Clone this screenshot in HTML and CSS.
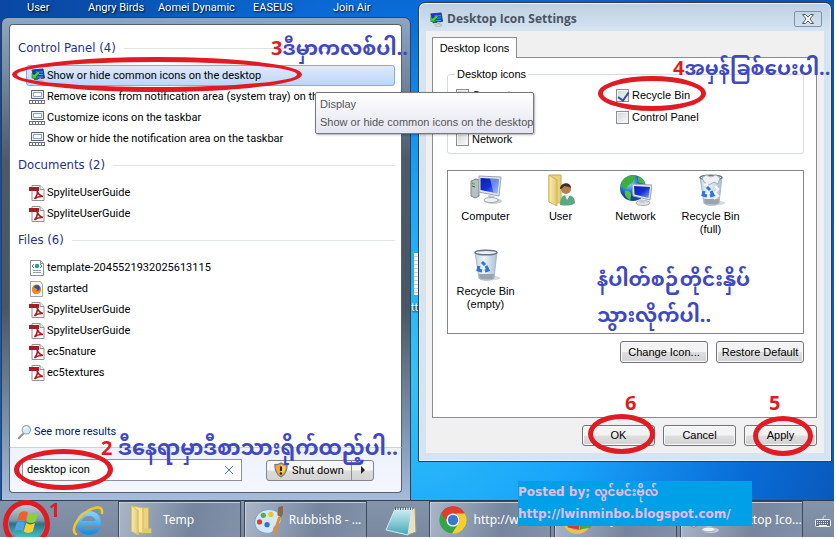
FILE: index.html
```
<!DOCTYPE html>
<html lang="en">
<head>
<meta charset="utf-8">
<title>Desktop</title>
<link rel="stylesheet" href="styles.css">
</head>
<body>
<svg class="defs" aria-hidden="true">
  <defs>
    <linearGradient id="screen" x1="0" y1="0" x2="1" y2="1"><stop offset="0" stop-color="#0a1fa8"/><stop offset=".5" stop-color="#1030d8"/><stop offset="1" stop-color="#7fa5f5"/></linearGradient>
    <linearGradient id="folder" x1="0" x2="1"><stop offset="0" stop-color="#fbeeb0"/><stop offset="1" stop-color="#dfc56a"/></linearGradient>
    <radialGradient id="globe" cx=".35" cy=".3"><stop offset="0" stop-color="#9fe0ff"/><stop offset=".6" stop-color="#2a86d8"/><stop offset="1" stop-color="#0d4a9c"/></radialGradient>
    <linearGradient id="bin" x1="0" x2="1"><stop offset="0" stop-color="#b9cfe4"/><stop offset=".4" stop-color="#e9f3fc"/><stop offset="1" stop-color="#9fb8d0"/></linearGradient>
    <linearGradient id="orb" x1="0" y1="0" x2="0" y2="1"><stop offset="0" stop-color="#c3ced6"/><stop offset=".45" stop-color="#7d9aaa"/><stop offset=".55" stop-color="#2f6f86"/><stop offset="1" stop-color="#3fd8cc"/></linearGradient>
    <linearGradient id="note" x1="0" y1="0" x2="0" y2="1"><stop offset="0" stop-color="#d5f1f4"/><stop offset="1" stop-color="#45a8b8"/></linearGradient>
    <linearGradient id="ie" x1="0" y1="0" x2="0" y2="1"><stop offset="0" stop-color="#7fd0fa"/><stop offset="1" stop-color="#1d8fe0"/></linearGradient>
  </defs>
  <symbol id="i-pdf" viewBox="0 0 16 16">
    <path d="M3 .5h8l4 4v11H3z" fill="#fff" stroke="#9a8f90"/><path d="M11 .5v4h4" fill="#eee" stroke="#9a8f90"/>
    <path d="M0 2h10v4H0z" fill="#a81c28"/><path d="M8 5c1 4 4 6 6 6.500-4-.5-7 1-8.500 2.500C8 11 9 8 8 5z" fill="none" stroke="#b01522" stroke-width="1.500"/>
  </symbol>
  <symbol id="i-tray" viewBox="0 0 16 16">
    <path d="M2.500 1.500h12v8h-12z" fill="#eef2f6" stroke="#59636e"/><path d="M4.500 3.500h8v4h-8z" fill="#fff" stroke="#8fa2b5"/>
    <path d="M0 11h16v4H0z" fill="#6b7177"/><path d="M1 13h14" stroke="#fff" stroke-width="2" stroke-dasharray="2 1"/>
  </symbol>
  <symbol id="i-display" viewBox="0 0 16 16">
    <path d="M3 2l11-1 1.500 9-10 1.500z" fill="#1739c8" stroke="#39404c"/><path d="M7 4h7M7 6.500h7M8 9h6" stroke="#49a1ff"/>
    <path d="M9 11l1 3h3l-1-4z" fill="#b9c0c9"/><ellipse cx="11" cy="14" rx="4" ry="1.400" fill="#d4d8dd" stroke="#99a0a8" stroke-width=".6"/><path d="M3 10V5l2 2 4-4 2 2-4 4 2 2z" fill="#3fd23c" stroke="#11691a" stroke-width=".6"/>
  </symbol>
  <symbol id="i-xml" viewBox="0 0 16 16">
    <path d="M1.500.5h10l3 3v12h-13z" fill="#fff" stroke="#8b8f94"/><path d="M11.500.5v3h3" fill="#ddd" stroke="#8b8f94"/>
    <circle cx="8" cy="6" r="2.200" fill="#2a9b8c"/><path d="M5 4L3 6l2 2M11 4l2 2-2 2" fill="none" stroke="#5577a0"/><path d="M4 10.500h8M4 12.500h8" stroke="#92a0b5"/>
  </symbol>
  <symbol id="i-fox" viewBox="0 0 16 16">
    <path d="M1.500.5h10l2 3v12h-12z" fill="#fafafa" stroke="#a2a2a2"/><circle cx="7.500" cy="8" r="4.500" fill="#e8701a"/><circle cx="8" cy="7" r="2.800" fill="#24549d"/><path d="M3 8c1-3 3-1 5 0 1 1-1 2-2 2 3 1 5 0 6-2 0 3-2 5-5 5S3 11 3 8z" fill="#f08b20"/>
  </symbol>
  <symbol id="i-lens" viewBox="0 0 16 16">
    <path d="M6 10l-5 5" stroke="#9a9590" stroke-width="2.500" stroke-linecap="round"/><circle cx="9.500" cy="5.500" r="4.800" fill="#d7ebfa" stroke="#8fa5b8" stroke-width="1.300"/><path d="M6.500 5c.5-2 2-3 4-2.500" fill="none" stroke="#fff" stroke-width="1.500"/>
  </symbol>
  <symbol id="i-shield" viewBox="0 0 16 18">
    <path d="M8 1c2 1.500 4.500 2 7 2 0 7-2 11-7 14C3 14 1 10 1 3c2.500 0 5-.5 7-2z" fill="#f4a91e" stroke="#77808a" stroke-width="1.500"/><path d="M8 3v12c3-2 5-5 5-10-2 0-3.500-.8-5-2z" fill="#fbcf58"/><path d="M8 5v5" stroke="#222" stroke-width="2.400"/><circle cx="8" cy="13" r="1.400" fill="#222"/>
  </symbol>
  <symbol id="i-computer" viewBox="0 0 32 32">
    <ellipse cx="23" cy="27" rx="9" ry="3" fill="#c9cdd1"/>
    <path d="M1 7l5-2 3 1v16l-4 2-4-2z" fill="#b9bec3" stroke="#7f868d"/><path d="M2 9l3 1M2 12l3 1" stroke="#555"/><circle cx="4" cy="10" r="1.200" fill="#5bd84a"/>
    <path d="M9 2l22 1-2 19-20-4z" fill="#e4e8ee" stroke="#9aa3ad"/><path d="M10.500 4l18.500 1-1.500 14.500-17-3.500z" fill="url(#screen)"/><path d="M20 4.500l9 .5-1.500 14.500-4-1z" fill="#b8ccff" opacity=".55"/>
    <path d="M18 21l6 1 1 4h-6z" fill="#c2c7cd"/><ellipse cx="21" cy="26" rx="7" ry="2.500" fill="#eef0f3" stroke="#a6acb3"/>
  </symbol>
  <symbol id="i-user" viewBox="0 0 32 32">
    <path d="M4 1h12v28l-10-1H4z" fill="#e9d17c" stroke="#c9aa4c"/><path d="M4 1l8 5v26l-8-4z" fill="url(#folder)" stroke="#ceb566"/>
    <path d="M15 31c0-8 3-10 7-10s8 2 8 8c-3 3-10 3-15 2z" fill="#5aa984"/><path d="M20 21l2 5 3-5z" fill="#e9f3ee"/><circle cx="21" cy="15" r="5" fill="#b57f52"/><path d="M15 15c0-7 11-8 11-1-2-1-5-2-7-2-1 2-2 3-4 3z" fill="#3d3026"/>
  </symbol>
  <symbol id="i-network" viewBox="0 0 32 32">
    <circle cx="13" cy="14" r="13" fill="url(#globe)"/><path d="M4 5c4-4 9-4 12-4 0 4-3 4-3 7-3 3-6 3-7 7-2 0-3-2-5-2 0-3 1-6 3-8z" fill="#3fae3c"/><path d="M5 17c4-1 7 2 6 5-1 2 0 4-1 4-4-2-6-5-5-9z" fill="#57bf3f"/><path d="M18 2c4 1 7 5 7 8-4 0-6-1-7-3z" fill="#49b148"/>
    <path d="M12 10l20 1-2 15-17-4z" fill="#e4e8ee" stroke="#9aa3ad"/><path d="M14 12l16 1-1.500 11-14-3.500z" fill="url(#screen)"/>
    <ellipse cx="23" cy="29" rx="7" ry="2.500" fill="#dfe3e8" stroke="#a6acb3"/><path d="M20 25l5 1v3h-5z" fill="#c6cbd1"/>
  </symbol>
  <symbol id="i-bin" viewBox="0 0 32 32">
    <ellipse cx="19" cy="29" rx="11" ry="2.500" fill="#d5d8dc"/><path d="M5 3h22l-3 26c-3 3-13 3-15 0z" fill="url(#bin)" stroke="#a3b1be" opacity=".9"/>
    <path d="M9 25h15l-.5 4c-3 2-12 2-14 0z" fill="#9aa4ad"/><ellipse cx="16" cy="3.500" rx="11" ry="2.300" fill="#e9f1f8" stroke="#68757f" stroke-width="1.400"/>
    <path d="M12 13l3 3M9 17l-1 4 4 1M15 22l3-1-2-4" fill="none" stroke="#2e74d0" stroke-width="3"/>
  </symbol>
  <symbol id="i-bin-full" viewBox="0 0 32 32">
    <use href="#i-bin"/><path d="M7 4l4-3 5 2 5-2 4 3-2 6-4-2-5 3-5-3z" fill="#eef2f6" stroke="#a1adb9"/><path d="M20 12l3 3-3 4 3 3-4 3M9 11l4-1" fill="none" stroke="#fff" stroke-width="2"/>
  </symbol>
  <symbol id="i-orb" viewBox="0 0 40 40">
    <circle cx="20" cy="20" r="19" fill="url(#orb)"/><path d="M12 11c3-3 6-3 9-1l-2.500 9c-3-2-6-2-9 0z" fill="#ee5f2a"/><path d="M22 10.500c3 2 6 2 9.500 0l-2.500 9c-3 2-6.500 2-9.500 0z" fill="#8fd03a"/><path d="M9 21c3-2 6-2 9 0l-2.500 9c-3-2-6-2-9 0z" fill="#4ba3ea"/><path d="M19 21c3 2 6 2 9.500 0L26 30c-3 2-6.500 2-9.500 0z" fill="#fbd02c"/>
  </symbol>
  <symbol id="i-ie" viewBox="0 0 32 32">
    <path d="M8 18.500h18.500c0-6-3.500-10-9.500-10s-10 4-10 9.500 4 9.500 10 9.500c4 0 7.500-2 9-5" fill="none" stroke="url(#ie)" stroke-width="5"/>
    <path d="M4 29C-2 25 6 12 15 6.500S31 1 30 8" fill="none" stroke="#f5c527" stroke-width="2.500" stroke-linecap="round"/>
  </symbol>
  <symbol id="i-folder" viewBox="0 0 28 32">
    <path d="M12 3h9v24l-7 3z" fill="#ecd37c" stroke="#ceb15a"/><path d="M3 1l12 2v27L3 28z" fill="#f8e59a" stroke="#d3b75b"/><path d="M3 1l7 5v26l-7-4z" fill="url(#folder)" stroke="#d8bf68"/><path d="M14 25h10v5H14z" fill="#e4c96a"/>
  </symbol>
  <symbol id="i-paint" viewBox="0 0 32 32">
    <path d="M15 5C6 6 1 14 2 20c1 8 10 11 16 10 5-1 3-5 5-7 3-3 7-1 7-8 0-6-7-11-15-10z" fill="#d3e8f6" stroke="#73a3c8"/><circle cx="7" cy="18" r="2.800" fill="#d44133"/><circle cx="11" cy="11" r="2.800" fill="#58ad3c"/><circle cx="19" cy="10" r="2.800" fill="#efc12d"/><circle cx="15" cy="21" r="2.800" fill="#3470c5"/><path d="M21 31l6-19 3 1-6 18z" fill="#e98a2b"/><path d="M26 11l1-9 5-1 1 6-3 6z" fill="#8c6746"/>
  </symbol>
  <symbol id="i-notepad" viewBox="0 0 32 32">
    <path d="M24 4l6-1 1 24-8 3z" fill="#e8e2c0" stroke="#a39c77"/><path d="M10 4l17-1-4 27-22-5z" fill="url(#note)" stroke="#dbe8ea"/><path d="M10 3.500h18" stroke="#526069" stroke-width="3" stroke-dasharray="1 1.500"/>
  </symbol>
  <symbol id="i-chrome" viewBox="0 0 32 32">
    <circle cx="16" cy="16" r="14.500" fill="#35a347"/><path d="M3.400 8.700A14.500 14.500 0 0 1 28.700 9H16a7 7 0 0 0-6 10z" fill="#e03c30"/><path d="M28.700 9A14.500 14.500 0 0 1 15 30.500l7-11A7 7 0 0 0 20 10V9z" fill="#f8ce2e"/><circle cx="16" cy="16" r="7" fill="#fff"/><circle cx="16" cy="16" r="5.500" fill="#2f7bd1"/>
  </symbol>
  <symbol id="i-reader" viewBox="0 0 32 32">
    <circle cx="15" cy="16" r="13" fill="none" stroke="#f0c04c" stroke-width="4"/><path d="M5 14l12 2v10L5 24z" fill="#c8452b"/><path d="M18 16l12-2v10l-12 2z" fill="#5b9f3b"/>
  </symbol>
  <symbol id="i-keyboard" viewBox="0 0 16 12">
    <path d="M8 4c0-3 1-3 3-3" fill="none" stroke="#dce3ec"/><rect x=".5" y="4.500" width="15" height="7" rx="1" fill="#5f6f86" stroke="#eef2f8"/><path d="M2 6.500h12M2 8.500h12" stroke="#eef2f8" stroke-dasharray="1 1"/><path d="M4 10.500h8" stroke="#eef2f8"/>
  </symbol>
</svg>

<main class="desktop">
  <span class="shortcut s-user">User</span>
  <span class="shortcut s-birds">Angry Birds</span>
  <span class="shortcut s-aomei">Aomei Dynamic</span>
  <span class="shortcut s-easeus">EASEUS</span>
  <span class="shortcut s-join">Join Air</span>
  <i class="page-edge"></i>
  <span class="shortcut s-hidden">tt</span>

  <section class="start-menu" aria-label="Start menu">
    <div class="results">
      <h2>Control Panel (4)</h2>
      <ul>
        <li class="selected"><svg><use href="#i-display"/></svg>Show or hide common icons on the desktop</li>
        <li><svg><use href="#i-tray"/></svg>Remove icons from notification area (system tray) on the desktop</li>
        <li><svg><use href="#i-tray"/></svg>Customize icons on the taskbar</li>
        <li><svg><use href="#i-tray"/></svg>Show or hide the notification area on the taskbar</li>
      </ul>
      <h2>Documents (2)</h2>
      <ul>
        <li><svg><use href="#i-pdf"/></svg>SpyliteUserGuide</li>
        <li><svg><use href="#i-pdf"/></svg>SpyliteUserGuide</li>
      </ul>
      <h2>Files (6)</h2>
      <ul>
        <li><svg><use href="#i-xml"/></svg>template-2045521932025613115</li>
        <li><svg><use href="#i-fox"/></svg>gstarted</li>
        <li><svg><use href="#i-pdf"/></svg>SpyliteUserGuide</li>
        <li><svg><use href="#i-pdf"/></svg>SpyliteUserGuide</li>
        <li><svg><use href="#i-pdf"/></svg>ec5nature</li>
        <li><svg><use href="#i-pdf"/></svg>ec5textures</li>
      </ul>
      <a class="more" href="#"><svg><use href="#i-lens"/></svg>See more results</a>
    </div>
    <div class="menu-foot">
      <div class="search">
        <input type="text" value="desktop icon" aria-label="Search programs and files">
        <button type="button" aria-label="Clear"><svg viewBox="0 0 8 8"><path d="M0 0l8 8M8 0L0 8"/></svg></button>
      </div>
      <div class="power">
        <button type="button" class="shut"><svg><use href="#i-shield"/></svg>Shut down</button>
        <button type="button" class="arrow" aria-label="More options"></button>
      </div>
    </div>
  </section>

  <section class="dialog" aria-label="Desktop Icon Settings">
    <header>
      <svg class="title-icon"><use href="#i-display"/></svg>
      <h1>Desktop Icon Settings</h1>
      <button type="button" class="close" aria-label="Close"><svg viewBox="0 0 12 10"><path d="M.5.500h3L6 3 8.500.500h3L8 5l3.500 4.500h-3L6 7 3.500 9.500h-3L4 5z"/></svg></button>
    </header>
    <div class="dialog-body">
      <button type="button" class="tab">Desktop Icons</button>
      <div class="page">
        <fieldset>
          <legend>Desktop icons</legend>
          <label><input type="checkbox" checked>Computer</label>
          <label><input type="checkbox" checked>Recycle Bin</label>
          <label><input type="checkbox">User's Files</label>
          <label><input type="checkbox">Control Panel</label>
          <label><input type="checkbox">Network</label>
        </fieldset>
        <div class="icon-list">
          <figure><svg><use href="#i-computer"/></svg><figcaption>Computer</figcaption></figure>
          <figure><svg><use href="#i-user"/></svg><figcaption>User</figcaption></figure>
          <figure><svg><use href="#i-network"/></svg><figcaption>Network</figcaption></figure>
          <figure><svg><use href="#i-bin-full"/></svg><figcaption>Recycle Bin (full)</figcaption></figure>
          <figure><svg><use href="#i-bin"/></svg><figcaption>Recycle Bin (empty)</figcaption></figure>
        </div>
        <div class="row">
          <button type="button" class="btn wide">Change Icon...</button>
          <button type="button" class="btn wide">Restore Default</button>
        </div>
      </div>
      <div class="row actions">
        <button type="button" class="btn">OK</button>
        <button type="button" class="btn">Cancel</button>
        <button type="button" class="btn">Apply</button>
      </div>
    </div>
  </section>

  <div class="tooltip" role="tooltip"><p>Display</p><p>Show or hide common icons on the desktop</p></div>

  <nav class="taskbar" aria-label="Taskbar">
    <button type="button" class="orb" aria-label="Start"><svg><use href="#i-orb"/></svg></button>
    <button type="button" class="pin" aria-label="Internet Explorer"><svg><use href="#i-ie"/></svg></button>
    <button type="button" class="task"><svg><use href="#i-folder"/></svg><span>Temp</span></button>
    <button type="button" class="task"><svg><use href="#i-paint"/></svg><span>Rubbish8 - ...</span></button>
    <button type="button" class="pin note" aria-label="Notepad"><svg><use href="#i-notepad"/></svg></button>
    <button type="button" class="task"><svg><use href="#i-chrome"/></svg><span>http://www...</span></button>
    <button type="button" class="task"><svg><use href="#i-reader"/></svg><span>My ...</span></button>
    <button type="button" class="task"><svg><use href="#i-computer"/></svg><span>Desktop Ico...</span></button>
    <div class="tray"><svg><use href="#i-keyboard"/></svg></div>
  </nav>

  <div class="credit"><p>Posted by; လွင်မင်းဗိုလ်</p><p>http://lwinminbo.blogspot.com/</p></div>

  <i class="ring r-start"></i><i class="ring r-search"></i><i class="ring r-item"></i><i class="ring r-check"></i><i class="ring r-apply"></i><i class="ring r-ok"></i>
  <p class="mark m-1"><b>1</b></p>
  <p class="mark m-2"><b>2</b> <span lang="my">ဒီနေရာမှာဒီစာသားရိုက်ထည့်ပါ..</span></p>
  <p class="mark m-3"><b>3</b><span lang="my">ဒီမှာကလစ်ပါ..</span></p>
  <p class="mark m-4"><b>4</b><span lang="my">အမှန်ခြစ်ပေးပါ..</span></p>
  <p class="mark m-5"><b>5</b></p>
  <p class="mark m-6"><b>6</b></p>
  <p class="mark m-note"><span lang="my">နံပါတ်စဉ်တိုင်းနှိပ်<br>သွားလိုက်ပါ..</span></p>
</main>
</body>
</html>
```
FILE: styles.css
```
:root {
  --ui: Roboto, "Noto Sans", sans-serif;
  --heading: "DejaVu Sans Condensed", "Noto Sans", sans-serif;
  --classic: "Liberation Sans", Arial, sans-serif;
  --red: #e01b24;
  --ink: #4048c0;
}

* { box-sizing: border-box; }

body { margin: 0; background: #fff; font: 11px/21px var(--ui); color: #000; }
h1, h2, p, ul, figure, fieldset { margin: 0; padding: 0; }
ul { list-style: none; }
button { font: inherit; color: inherit; padding: 0; margin: 0; background: none; border: 0; }
.defs { position: absolute; width: 0; height: 0; }

/* Desktop */
.desktop {
  position: relative;
  display: flex;
  flex-direction: column;
  height: calc(100vh - 2px);
  margin: 0 2px 2px 0;
  overflow: hidden;
  background:
    radial-gradient(ellipse 480px 480px at 48% 70%, #34c4f8 0%, #18a4fa 40%, rgba(8, 116, 228, .7) 75%, transparent 100%),
    linear-gradient(90deg, #0a48a4, #0c5cc0 50%, #0a54b4);
}
.shortcut { position: absolute; top: 0; line-height: 16px; color: #fff; text-shadow: 1px 1px 2px #000; white-space: nowrap; }
.s-user { left: 27px; }
.s-birds { left: 88px; }
.s-aomei { left: 158px; }
.s-easeus { left: 253px; }
.s-join { left: 333px; }
.s-hidden { left: 411px; top: 300px; }
.page-edge { position: absolute; left: 414px; top: 253px; width: 12px; height: 42px; background: repeating-linear-gradient(#fff 0 3px, #c8d0d8 3px 4px); }

/* Start menu */
.start-menu {
  position: absolute;
  left: 1px;
  top: 17px;
  width: 410px;
  padding: 6px 8px 7px 7px;
  border: 1px solid #33404f;
  border-radius: 7px 7px 0 0;
  background: linear-gradient(#8ea6c2, #7388a2 12%, #4c5967 30%, #4a5664 60%, #7e93b0 85%, #a6bcdb);
}
.results { height: 423px; padding: 12px 6px 0 8px; background: #fff; border: 1px solid #56636f; border-bottom: 0; border-radius: 4px 4px 0 0; }
.results h2 { display: flex; align-items: center; gap: 8px; font: 13px/22px var(--heading); color: #1e3287; }
.results h2::after { content: ""; flex: 1; height: 1px; background: #dfe3e8; }
.results ul { padding: 6px 0 5px 8px; }
.results li { display: flex; align-items: center; gap: 2px; height: 21px; padding-left: 2px; border: 1px solid transparent; border-radius: 3px; white-space: nowrap; }
.results li svg { flex: none; width: 16px; height: 16px; }
.results .selected { background: linear-gradient(#dfeafb, #bcd6fa); border-color: #84acdd; }
.more { display: flex; align-items: center; gap: 2px; margin-top: 33px; color: #001b66; text-decoration: none; }
.more svg { width: 14px; height: 16px; }
.menu-foot { display: flex; align-items: center; gap: 24px; height: 46px; padding: 0 27px 0 12px; background: linear-gradient(#eef2fb, #f3f6fd); border: 1px solid #56636f; border-top-color: #c7d2e3; border-radius: 0 0 4px 4px; }
.search { display: flex; align-items: center; flex: 1; height: 22px; padding-right: 8px; background: #fff; border: 1px solid #8a9099; }
.search input { flex: 1; min-width: 0; height: 20px; padding: 0 4px; border: 0; outline: 0; background: none; font: 11px/20px var(--ui); color: #000; }
.search svg { display: block; width: 8px; height: 8px; fill: none; stroke: #3f7fae; }
.power { display: flex; width: 108px; height: 21px; border: 1px solid #7f868e; border-radius: 3px; background: linear-gradient(#f6f6f6 48%, #dcdcdc 52%, #d3d3d3); }
.shut { display: flex; align-items: center; justify-content: center; gap: 4px; flex: 1; line-height: 19px; white-space: nowrap; }
.shut svg { width: 14px; height: 16px; }
.arrow { width: 22px; border-left: 1px solid #8a9097; display: flex; align-items: center; justify-content: center; }
.arrow::after { content: ""; border: 4px solid transparent; border-left-color: #222; border-right: 0; }

/* Dialog */
.dialog {
  position: absolute;
  left: 418px;
  top: 2px;
  width: 414px;
  padding: 0 7px 8px;
  border: 1px solid #2f3d4d;
  border-radius: 7px 7px 0 0;
  background: linear-gradient(#bccfe2, #d6e4f2 28px, #d6e4f2);
  box-shadow: inset 0 0 0 1px #e9f2fa;
  font: 11px/13px var(--classic);
}
.dialog header { display: flex; align-items: center; gap: 4px; height: 28px; padding: 4px 0 0 2px; }
.title-icon { width: 15px; height: 15px; }
.dialog h1 { flex: 1; font: bold 12px/16px "Open Sans", "Noto Sans", sans-serif; color: #4a5563; }
.close { display: flex; align-items: center; justify-content: center; width: 28px; height: 16px; margin-right: 2px; border: 1px solid #7f93ab; border-radius: 2px; }
.close svg { width: 12px; height: 10px; fill: #fff; stroke: #4a5a6c; }
.dialog-body { padding: 6px 7px 7px 6px; background: #f0f0f0; }
.tab { display: block; position: relative; z-index: 1; width: 85px; height: 21px; margin-bottom: -1px; background: #fff; border: 1px solid #8a8c90; border-bottom: 0; }
.page { padding: 10px 12px 54px 14px; background: #fff; border: 1px solid #8a8c90; }
fieldset { display: grid; grid-template-columns: 160px 1fr; align-content: start; row-gap: 8px; min-width: 0; height: 86px; padding: 7px 8px 0; border: 1px solid #d5dbe1; border-radius: 3px; }
legend { margin-left: -1px; padding: 0 2px; }
fieldset label { display: flex; align-items: center; gap: 3px; height: 14px; }
input[type="checkbox"] { appearance: none; width: 13px; height: 13px; margin: 0; border: 1px solid #8b8d90; background: linear-gradient(135deg, #cfd3d8, #fbfbfb); box-shadow: inset 0 0 0 1px #f4f4f4; }
input[type="checkbox"]:checked::after { content: ""; display: block; width: 5px; height: 9px; margin: 0 0 0 3px; border: solid #36549c; border-width: 0 2px 2px 0; transform: rotate(35deg); }
.icon-list { display: grid; grid-template-columns: repeat(4, 75px); grid-auto-rows: 75px; height: 164px; margin-top: 16px; padding-top: 3px; border: 1px solid #82868c; }
.icon-list figure { display: flex; flex-direction: column; align-items: center; gap: 4px; text-align: center; }
.icon-list svg { width: 32px; height: 32px; }
.icon-list figcaption { width: 64px; }
.row { display: flex; justify-content: flex-end; gap: 8px; margin-top: 7px; }
.btn { width: 73px; height: 21px; border: 1px solid #707478; border-radius: 3px; background: linear-gradient(#f3f3f3 48%, #dedede 52%, #d2d2d2); box-shadow: inset 0 0 0 1px #fbfbfb; white-space: nowrap; }
.wide { width: 88px; height: 22px; }

.tooltip { position: absolute; left: 315px; top: 92px; width: 219px; padding: 2px 4px; border: 1px solid #767676; border-radius: 2px; background: linear-gradient(#fff, #e4e5f0); color: #555; font: 11px/18px var(--classic); white-space: nowrap; box-shadow: 1px 1px 2px rgba(0, 0, 0, .3); }

/* Taskbar */
.taskbar { display: flex; height: 37px; margin-top: auto; border-top: 1px solid #2f3c4e; background: linear-gradient(#8494ab, #78899f); color: #fff; font: 12px/20px "Noto Sans", sans-serif; overflow: hidden; }
.orb { width: 52px; }
.orb svg { display: block; width: 38px; height: 38px; margin: 2px 0 0 8px; }
.pin { width: 66px; }
.pin svg { display: block; width: 32px; height: 32px; margin: 3px auto 0 20px; }
.note { width: 59px; }
.note svg { margin-left: 15px; }
.task { display: flex; align-items: center; flex: 1; gap: 6px; min-width: 0; margin-right: 3px; padding: 0 8px; border: 1px solid #3d4a5c; border-bottom: 0; background: linear-gradient(100deg, #a9b6c8, #74859d 60%, #8292a9); box-shadow: inset 1px 1px 0 #c3cddb; white-space: nowrap; }
.task svg { flex: none; width: 30px; height: 30px; }
.tray { width: 28px; padding: 14px 0 0 9px; }
.tray svg { display: block; width: 16px; height: 12px; }

/* Instruction notes */
.credit { position: absolute; left: 518px; top: 481px; width: 234px; height: 45px; background: #00a0e8; color: #e5bce8; font: bold 12px/22px "DejaVu Sans", "Noto Sans Myanmar", sans-serif; white-space: nowrap; }
.ring { position: absolute; border: 5px solid var(--red); border-radius: 50%; }
.r-start { left: 3px; top: 500px; width: 47px; height: 48px; }
.r-search { left: 14px; top: 449px; width: 99px; height: 41px; }
.r-item { left: 12px; top: 57px; width: 290px; height: 35px; }
.r-check { left: 598px; top: 76px; width: 108px; height: 35px; }
.r-apply { left: 753px; top: 416px; width: 60px; height: 40px; }
.r-ok { left: 588px; top: 414px; width: 67px; height: 40px; }
.mark { position: absolute; color: var(--ink); font: bold 20px/36px "Noto Sans Myanmar", Padauk, "DejaVu Sans", sans-serif; white-space: nowrap; }
.mark b { color: var(--red); font: bold 20px/24px "Noto Sans", sans-serif; }
.m-1 { left: 49px; top: 495px; }
.m-2 { left: 101px; top: 432px; font-size: 21px; }
.m-3 { left: 271px; top: 33px; }
.m-4 { left: 673px; top: 53px; }
.m-5 { left: 769px; top: 388px; }
.m-6 { left: 625px; top: 388px; }
.m-note { left: 597px; top: 264px; }
```
